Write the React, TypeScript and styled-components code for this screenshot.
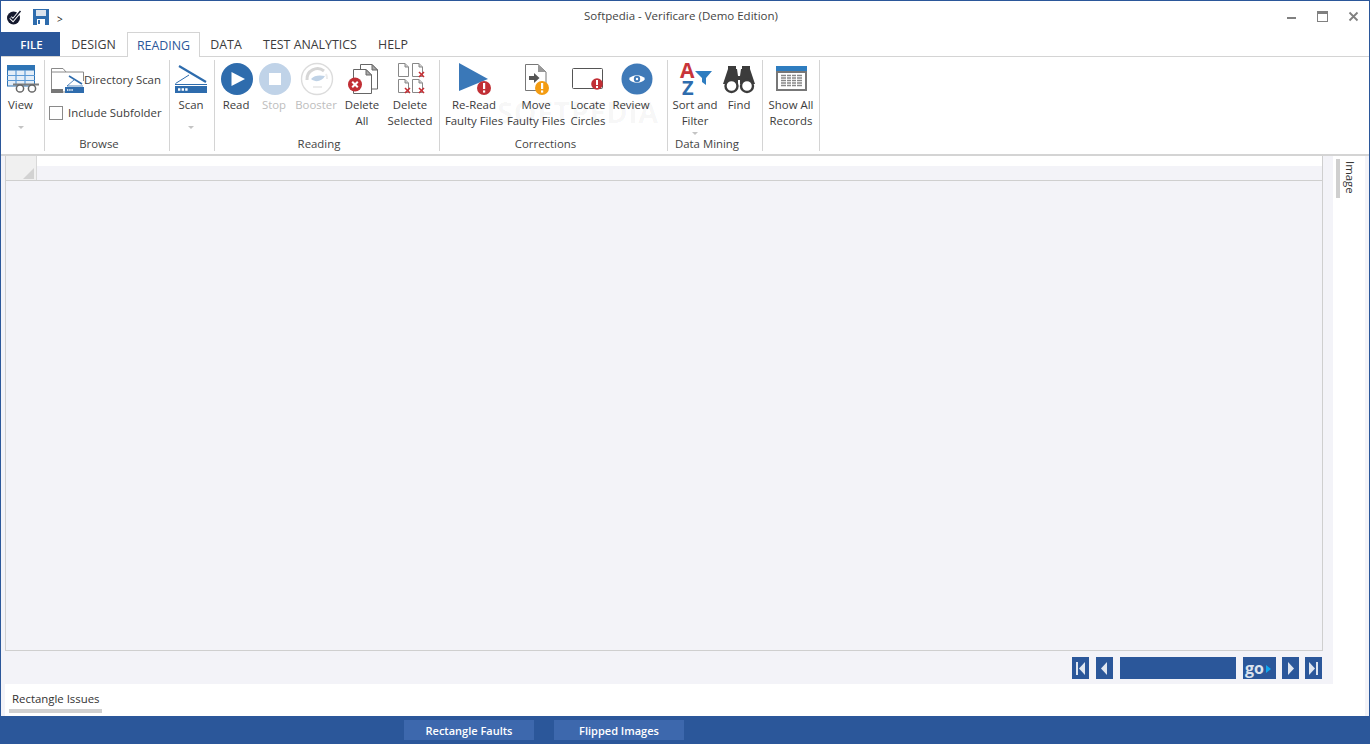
import React from "react";
import styled, { createGlobalStyle } from "styled-components";

const GlobalStyle = createGlobalStyle`
  html, body {
    margin: 0;
    padding: 0;
    overflow: hidden;
    background: #fff;
  }
  * {
    box-sizing: border-box;
  }
`;

const BLUE = "#2b579a";
const LINE = "#d4d4d4";
const PANEL = "#f3f3f8";

const Window = styled.div`
  width: 1370px;
  height: 744px;
  display: flex;
  flex-direction: column;
  position: relative;
  background: #fff;
  border: 1px solid ${BLUE};
  border-bottom: none;
  font-family: "Open Sans", "Liberation Sans", sans-serif;
  font-size: 11.4px;
  color: #3c3c3c;
`;

const TitleBar = styled.div`
  height: 31px;
  flex: none;
  display: grid;
  grid-template-columns: 1fr auto 1fr;
  align-items: center;
  padding-right: 8px;
`;

const QuickAccess = styled.div`
  display: flex;
  align-items: center;
  gap: 11px;
  padding: 0 0 0 5px;
`;

const Chevron = styled.span`
  font-size: 10px;
  margin: 4px 0 0 -3px;
  color: #222;
`;

const Title = styled.div`
  font-size: 11.5px;
  color: #444;
  padding-bottom: 3px;
`;

const WindowButtons = styled.div`
  display: flex;
  justify-content: flex-end;
  align-items: center;
  gap: 20px;
  padding-right: 2px;
  padding-bottom: 1px;
`;

const TabRow = styled.div`
  height: 25px;
  flex: none;
  display: flex;
  border-bottom: 1px solid ${LINE};
`;

const Tab = styled.div<{ $w: number; $active?: boolean; $file?: boolean }>`
  width: ${({ $w }) => $w}px;
  height: ${({ $active }) => ($active ? "25px" : "24px")};
  display: flex;
  align-items: center;
  justify-content: center;
  font-size: ${({ $file }) => ($file ? "11.5px" : "12.4px")};
  font-weight: ${({ $file }) => ($file ? 600 : 400)};
  padding-left: ${({ $file }) => ($file ? "2px" : "0")};
  background: ${({ $file }) => ($file ? BLUE : "#fff")};
  color: ${({ $file, $active }) => ($file ? "#fff" : $active ? BLUE : "#3c3c3c")};
  border: ${({ $active }) => ($active ? `1px solid ${LINE}` : "none")};
  border-bottom: none;
  position: relative;
  z-index: 1;
`;

const Ribbon = styled.div`
  height: 99px;
  flex: none;
  display: flex;
  border-bottom: 2px solid ${LINE};
`;

const Group = styled.div<{ $w: number }>`
  width: ${({ $w }) => $w}px;
  height: 91px;
  margin-top: 3px;
  flex: none;
  display: flex;
  flex-direction: column;
  border-right: 1px solid ${LINE};
`;

const GroupBody = styled.div`
  flex: 1;
  display: flex;
  min-height: 0;
`;

const GroupLabel = styled.div`
  height: 15px;
  line-height: 15px;
  padding-right: 16px;
  text-align: center;
  color: #444;
`;

const RibbonButton = styled.div<{ $w: number; $off?: boolean }>`
  width: ${({ $w }) => $w}px;
  flex: none;
  display: flex;
  flex-direction: column;
  align-items: center;
  color: ${({ $off }) => ($off ? "#bdbdbd" : "#3c3c3c")};
`;

const IconSlot = styled.div<{ $shift?: number }>`
  height: 37px;
  flex: none;
  display: flex;
  align-items: flex-start;
  justify-content: center;
  margin-left: ${({ $shift }) => $shift ?? 0}px;
`;

const ButtonText = styled.div`
  line-height: 16px;
  text-align: center;
  white-space: nowrap;
`;

const Caret = styled.span<{ $gap: number }>`
  margin-top: ${({ $gap }) => $gap}px;
  width: 0;
  height: 0;
  border-left: 3.5px solid transparent;
  border-right: 3.5px solid transparent;
  border-top: 3.5px solid #c4c4c4;
`;

const BrowseBody = styled.div`
  padding: 2px 0 0 6px;
  display: flex;
  flex-direction: column;
`;

const BrowseRow = styled.div`
  height: 34px;
  display: flex;
  align-items: center;
  gap: 0;
  white-space: nowrap;
`;

const BrowseIcon = styled.div`
  height: 30px;
  margin-top: 2px;
  flex: none;
`;

const CheckRow = styled.label`
  display: flex;
  align-items: center;
  gap: 5px;
  margin: 9px 0 0 -2px;
  white-space: nowrap;
`;

const CheckBox = styled.span`
  width: 14px;
  height: 14px;
  background: #fff;
  border: 1px solid #8a8a8a;
`;

const Watermark = styled.div`
  position: absolute;
  left: 496px;
  top: 91px;
  font-size: 29px;
  font-weight: 700;
  letter-spacing: 0.5px;
  color: rgba(0, 0, 0, 0.035);
  pointer-events: none;
`;

const Workspace = styled.div`
  flex: 1;
  min-height: 0;
  display: flex;
  background: ${PANEL};
  padding: 0 4px;
`;

const MainColumn = styled.div`
  flex: 1;
  min-width: 0;
  display: flex;
  flex-direction: column;
`;

const GridPanel = styled.div`
  flex: 1;
  margin-right: 10px;
  border: 1px solid #cfcfcf;
  border-top: none;
`;

const GridHeader = styled.div`
  height: 25px;
  display: flex;
  border-bottom: 1px solid #cfcfcf;
`;

const CornerCell = styled.div`
  width: 30px;
  background: #f0f0f0;
  display: flex;
  align-items: flex-end;
  justify-content: flex-end;
  padding: 0 2px 1px 0;
`;

const CornerMark = styled.span`
  width: 0;
  height: 0;
  border-left: 11px solid transparent;
  border-bottom: 11px solid #d2d2d2;
`;

const HeaderFill = styled.div`
  flex: 1;
  background: linear-gradient(#fff 0, #fff 40%, ${PANEL} 40%, ${PANEL} 100%);
  border-left: 1px solid #d8d8d8;
`;

const NavBar = styled.div`
  height: 33px;
  flex: none;
  display: flex;
  justify-content: flex-end;
  align-items: flex-start;
  padding: 6px 11px 0 0;
`;

const NavButton = styled.button<{ $mr: number }>`
  width: 17px;
  height: 22px;
  margin: 0 ${({ $mr }) => $mr}px 0 0;
  padding: 0;
  border: none;
  background: ${BLUE};
  display: flex;
  align-items: center;
  justify-content: center;
`;

const PageField = styled.div`
  width: 116px;
  height: 22px;
  margin-right: 7px;
  background: ${BLUE};
`;

const GoButton = styled.button`
  width: 33px;
  height: 22px;
  margin-right: 6px;
  padding: 0 0 0 2px;
  border: none;
  background: ${BLUE};
  color: #dbe3ee;
  font-family: "Open Sans", sans-serif;
  font-size: 16px;
  font-weight: 700;
  line-height: 20px;
  display: flex;
  align-items: center;
  gap: 2px;
`;

const SidePanel = styled.div`
  width: 32px;
  flex: none;
  background: #fff;
  padding: 3px 0 0 3px;
`;

const SideTab = styled.div`
  width: 22px;
  height: 39px;
  border-left: 4px solid #cfcfcf;
  writing-mode: vertical-rl;
  padding: 2px 0 0 0;
  line-height: 16px;
  color: #333;
`;

const FooterBand = styled.div`
  height: 32px;
  flex: none;
  background: ${PANEL};
  padding: 0 4px;
`;

const FooterTabs = styled.div`
  height: 100%;
  background: #fff;
  padding: 6px 0 0 4px;
`;

const FooterTab = styled.div`
  width: 93px;
  height: 23px;
  line-height: 18px;
  padding-left: 3px;
  border-bottom: 4px solid #d0d0d0;
  white-space: nowrap;
  color: #333;
`;

const StatusBar = styled.div`
  height: 28px;
  flex: none;
  background: ${BLUE};
  display: flex;
  gap: 20px;
  padding: 4px 0 0 403px;
`;

const StatusButton = styled.div`
  width: 130px;
  height: 20px;
  background: #3d68ad;
  color: #fff;
  font-weight: 600;
  font-size: 11px;
  line-height: 21px;
  text-align: center;
`;

const AppMark = () => (
  <svg width="16" height="16" viewBox="0 0 16 16">
    <circle cx="7.5" cy="9" r="6.5" fill="#14182c" />
    <path d="M4.5 8.5 L7 11 L14.5 2" fill="none" stroke="#fff" strokeWidth="3.4" />
    <path d="M4.5 8.5 L7 11 L14.5 2" fill="none" stroke="#14182c" strokeWidth="1.5" />
  </svg>
);

const SaveIcon = () => (
  <svg width="16" height="16" viewBox="0 0 16 16">
    <rect width="16" height="16" fill="#2e6cad" />
    <rect x="3" y="1" width="10" height="6" fill="#dbe3ec" />
    <rect x="4" y="10" width="8" height="6" fill="#fff" />
    <rect x="5" y="11" width="2" height="4" fill="#2e6cad" />
  </svg>
);

const ViewIcon = () => (
  <svg width="36" height="36" viewBox="0 0 36 36">
    <rect x="4" y="5" width="28" height="5" fill="#2e74b5" />
    <rect x="4.5" y="10" width="27" height="16" fill="#e4eef8" stroke="#2e74b5" />
    <path d="M4 15.5H32M4 20.5H32M13 10V26M22 10V26" stroke="#5c9ad6" strokeWidth="1.2" />
    <path d="M10 24.5H36" stroke="#7d7d7d" strokeWidth="2" />
    <circle cx="17" cy="28.5" r="3.6" fill="#fff" stroke="#666" strokeWidth="1.5" />
    <circle cx="29" cy="28.5" r="3.6" fill="#fff" stroke="#666" strokeWidth="1.5" />
  </svg>
);

const DirectoryIcon = () => (
  <svg width="33" height="30" viewBox="0 0 33 30">
    <path d="M0.5 27V3.5H12L15 7H32.5V16" fill="none" stroke="#8a8a8a" />
    <path d="M0.5 7H15" stroke="#8a8a8a" />
    <rect x="0" y="24" width="12" height="4" fill="#777" />
    <path d="M12 27H14" stroke="#8a8a8a" />
    <path d="M18 11 L31 19" stroke="#2e6cad" strokeWidth="1.6" />
    <path d="M16 21 L23 15 M16 21H32" stroke="#2e6cad" strokeWidth="0.8" fill="none" />
    <rect x="14" y="22" width="19" height="6" fill="#2e6cad" />
    <path d="M16 25H22" stroke="#fff" strokeWidth="1.4" strokeDasharray="1.4 .8" />
  </svg>
);

const ScanIcon = () => (
  <svg width="34" height="36" viewBox="0 0 34 36">
    <path d="M5 6 L32 22" stroke="#2e6cad" strokeWidth="2.2" />
    <path d="M1.5 23.5 L15 15 M1 24.5H33" stroke="#2e6cad" strokeWidth="1" fill="none" />
    <rect x="1" y="26" width="32" height="7" fill="#2e6cad" />
    <path d="M4 29.5H14" stroke="#fff" strokeWidth="2.4" strokeDasharray="2.4 1.2" />
  </svg>
);

const ReadIcon = () => (
  <svg width="34" height="36" viewBox="0 0 34 36">
    <circle cx="17" cy="19" r="16" fill="#2e6cad" />
    <path d="M11.5 12 L25 19 L11.5 26Z" fill="#fff" />
  </svg>
);

const StopIcon = () => (
  <svg width="34" height="36" viewBox="0 0 34 36">
    <circle cx="17" cy="19" r="16" fill="#c0d3e8" />
    <rect x="11" y="13" width="12" height="12" fill="#fff" />
  </svg>
);

const BoosterIcon = () => (
  <svg width="34" height="36" viewBox="0 0 34 36">
    <circle cx="17" cy="19" r="15.5" fill="#fff" stroke="#dcdcdc" strokeWidth="1.4" />
    <path d="M7 20 A10.5 10.5 0 0 1 24 11" fill="none" stroke="#d6d6d6" strokeWidth="3" />
    <path d="M26 14 A10 10 0 0 1 27 19" fill="none" stroke="#ececec" strokeWidth="2" />
    <path d="M11 19 C14 15 20 15 25 16 C22 21 16 23 11 19Z" fill="#bfd2e6" />
    <path d="M13 27H22" stroke="#e2e2e2" strokeWidth="1.4" />
  </svg>
);

const DeleteAllIcon = () => (
  <svg width="34" height="36" viewBox="0 0 34 36">
    <path d="M15.5 4.5H27L32.5 10V29H15.5Z" fill="#fff" stroke="#666" />
    <path d="M27 4.5V10H32.5Z" fill="#aaa" stroke="#666" />
    <path d="M8.5 9.5H21L26.5 15V33.5H8.5Z" fill="#fff" stroke="#666" />
    <path d="M21 9.5V15H26.5Z" fill="#aaa" stroke="#666" />
    <circle cx="10" cy="24.5" r="7" fill="#c12f35" />
    <path d="M7.2 21.7L12.8 27.3M12.8 21.7L7.2 27.3" stroke="#fff" strokeWidth="2" />
  </svg>
);

const smallDoc = (x: number, y: number, cross: boolean) => (
  <g key={`${x}-${y}`}>
    <path
      d={`M${x + 0.5} ${y + 0.5}H${x + 7}L${x + 10.5} ${y + 4}V${y + 13.5}H${x + 0.5}Z`}
      fill="#fff"
      stroke="#888"
    />
    <path d={`M${x + 7} ${y + 0.5}V${y + 4}H${x + 10.5}`} fill="#ccc" stroke="#888" />
    {cross && (
      <path
        d={`M${x + 7} ${y + 9}L${x + 12} ${y + 14}M${x + 12} ${y + 9}L${x + 7} ${y + 14}`}
        stroke="#c62f35"
        strokeWidth="1.6"
      />
    )}
  </g>
);

const DeleteSelectedIcon = () => (
  <svg width="34" height="36" viewBox="0 0 34 36">
    {smallDoc(5, 3, false)}
    {smallDoc(19, 3, true)}
    {smallDoc(5, 19, true)}
    {smallDoc(19, 19, true)}
  </svg>
);

const ReReadIcon = () => (
  <svg width="34" height="36" viewBox="0 0 34 36">
    <path d="M2 3 L31 19 L2 31Z" fill="#3a78b8" />
    <circle cx="27" cy="28" r="7" fill="#c12f35" />
    <rect x="26" y="23" width="2.2" height="6" fill="#fff" />
    <rect x="26" y="30.4" width="2.2" height="2.2" fill="#fff" />
  </svg>
);

const MoveIcon = () => (
  <svg width="34" height="36" viewBox="0 0 34 36">
    <path d="M6.5 4.5H19L27 12V30.5H6.5Z" fill="#fff" stroke="#777" />
    <path d="M19 4.5V12H27Z" fill="#999" />
    <path d="M10 16H15V13L20.5 18L15 23V20H10Z" fill="#555" />
    <circle cx="23" cy="28" r="7" fill="#f39c12" />
    <rect x="22" y="23" width="2.2" height="6" fill="#fff" />
    <rect x="22" y="30.4" width="2.2" height="2.2" fill="#fff" />
  </svg>
);

const LocateIcon = () => (
  <svg width="36" height="36" viewBox="0 0 36 36">
    <rect x="2.5" y="8.5" width="30" height="20" rx="1" fill="#fff" stroke="#555" />
    <circle cx="27" cy="24" r="5.8" fill="#c12f35" />
    <rect x="26" y="20" width="2" height="5" fill="#fff" />
    <rect x="26" y="26" width="2" height="2" fill="#fff" />
  </svg>
);

const ReviewIcon = () => (
  <svg width="34" height="36" viewBox="0 0 34 36">
    <circle cx="17" cy="19" r="15.5" fill="#3f7ab8" />
    <path d="M9 19 C12 14 22 14 25 19 C22 24 12 24 9 19Z" fill="#fff" />
    <circle cx="17" cy="19" r="3.2" fill="#3f7ab8" />
    <circle cx="17" cy="19" r="1.2" fill="#fff" />
  </svg>
);

const SortIcon = () => (
  <svg width="34" height="36" viewBox="0 0 34 36" overflow="visible">
    <text x="-1" y="18" fontFamily="'Open Sans', sans-serif" fontSize="21" fontWeight="700" fill="#c8353a">
      A
    </text>
    <text x="1" y="35" fontFamily="'Open Sans', sans-serif" fontSize="20" fontWeight="700" fill="#2e6cad">
      Z
    </text>
    <path d="M14 11H31L25 18V25L21 22V18Z" fill="#2e7dc0" />
  </svg>
);

const FindIcon = () => (
  <svg width="34" height="36" viewBox="0 0 34 36">
    <path d="M6 6H14V9H15L16 16H18L19 9H20V6H28V9L33 24H18V20H16V24H1L6 9Z" fill="#3c3c3c" />
    <circle cx="9.5" cy="26" r="6" fill="#fff" stroke="#3c3c3c" strokeWidth="2.4" />
    <circle cx="25" cy="26" r="6" fill="#fff" stroke="#3c3c3c" strokeWidth="2.4" />
  </svg>
);

const RecordsIcon = () => (
  <svg width="34" height="36" viewBox="0 0 34 36">
    <rect x="2" y="6" width="31" height="6" fill="#2e7dc0" />
    <rect x="3" y="12" width="29" height="18" fill="#fff" stroke="#777" strokeWidth="2" />
    <path
      d="M7 15.5H28M7 18H28M7 20.5H28M7 23H28M7 25.5H28"
      stroke="#888"
      strokeWidth="1.3"
    />
    <path d="M12.5 14V27M17.5 14V27M22.5 14V27" stroke="#fff" strokeWidth="1" />
  </svg>
);

const GoArrow = () => (
  <svg width="5" height="8" viewBox="0 0 5 8" style={{ flex: "none", marginTop: 1 }}>
    <path d="M0 0L5 4L0 8Z" fill="#0fa8f0" />
  </svg>
);

const Arrow = ({ dir, bar }: { dir: "left" | "right"; bar?: boolean }) => (
  <svg width="11" height="13" viewBox="0 0 11 13">
    {dir === "left" ? (
      <>
        {bar && <rect x="1" y="0" width="2" height="13" fill="#dfe6f0" />}
        <path d={bar ? "M10 0V13L4 6.5Z" : "M8 0V13L2 6.5Z"} fill="#dfe6f0" />
      </>
    ) : (
      <>
        <path d={bar ? "M1 0V13L7 6.5Z" : "M3 0V13L9 6.5Z"} fill="#dfe6f0" />
        {bar && <rect x="8" y="0" width="2" height="13" fill="#dfe6f0" />}
      </>
    )}
  </svg>
);

const tabs = [
  { label: "DESIGN", w: 67 },
  { label: "READING", w: 73, active: true },
  { label: "DATA", w: 52 },
  { label: "TEST ANALYTICS", w: 116 },
  { label: "HELP", w: 50 },
];

const App: React.FC = () => {
  return (
    <Window>
      <GlobalStyle />
      <TitleBar>
        <QuickAccess>
          <AppMark />
          <SaveIcon />
          <Chevron>&gt;</Chevron>
        </QuickAccess>
        <Title>Softpedia - Verificare (Demo Edition)</Title>
        <WindowButtons>
          <svg width="11" height="11" viewBox="0 0 11 11">
            <rect x="1" y="6" width="9" height="2" fill="#808080" />
          </svg>
          <svg width="11" height="11" viewBox="0 0 11 11">
            <rect x="0.5" y="0.5" width="10" height="10" fill="none" stroke="#808080" />
            <rect x="0" y="0" width="11" height="3" fill="#808080" />
          </svg>
          <svg width="11" height="11" viewBox="0 0 11 11">
            <path d="M1.5 1.5L9.5 9.5M9.5 1.5L1.5 9.5" stroke="#808080" strokeWidth="1.8" />
          </svg>
        </WindowButtons>
      </TitleBar>

      <TabRow>
        <Tab $w={59} $file>
          FILE
        </Tab>
        {tabs.map((tab) => (
          <Tab key={tab.label} $w={tab.w} $active={tab.active}>
            {tab.label}
          </Tab>
        ))}
      </TabRow>

      <Ribbon>
        <Group $w={44}>
          <GroupBody>
            <RibbonButton $w={39}>
              <IconSlot>
                <ViewIcon />
              </IconSlot>
              <ButtonText>View</ButtonText>
              <Caret $gap={13} />
            </RibbonButton>
          </GroupBody>
          <GroupLabel />
        </Group>

        <Group $w={125}>
          <GroupBody>
            <BrowseBody>
              <BrowseRow>
                <BrowseIcon>
                  <DirectoryIcon />
                </BrowseIcon>
                Directory Scan
              </BrowseRow>
              <CheckRow>
                <CheckBox />
                Include Subfolder
              </CheckRow>
            </BrowseBody>
          </GroupBody>
          <GroupLabel>Browse</GroupLabel>
        </Group>

        <Group $w={45}>
          <GroupBody>
            <RibbonButton $w={42}>
              <IconSlot>
                <ScanIcon />
              </IconSlot>
              <ButtonText>Scan</ButtonText>
              <Caret $gap={13} />
            </RibbonButton>
          </GroupBody>
          <GroupLabel />
        </Group>

        <Group $w={225}>
          <GroupBody>
            <RibbonButton $w={42}>
              <IconSlot $shift={2}>
                <ReadIcon />
              </IconSlot>
              <ButtonText>Read</ButtonText>
            </RibbonButton>
            <RibbonButton $w={34} $off>
              <IconSlot $shift={2}>
                <StopIcon />
              </IconSlot>
              <ButtonText>Stop</ButtonText>
            </RibbonButton>
            <RibbonButton $w={50} $off>
              <IconSlot $shift={2}>
                <BoosterIcon />
              </IconSlot>
              <ButtonText>Booster</ButtonText>
            </RibbonButton>
            <RibbonButton $w={42}>
              <IconSlot>
                <DeleteAllIcon />
              </IconSlot>
              <ButtonText>
                Delete
                <br />
                All
              </ButtonText>
            </RibbonButton>
            <RibbonButton $w={54}>
              <IconSlot>
                <DeleteSelectedIcon />
              </IconSlot>
              <ButtonText>
                Delete
                <br />
                Selected
              </ButtonText>
            </RibbonButton>
          </GroupBody>
          <GroupLabel>Reading</GroupLabel>
        </Group>

        <Group $w={228}>
          <GroupBody>
            <RibbonButton $w={68}>
              <IconSlot>
                <ReReadIcon />
              </IconSlot>
              <ButtonText>
                Re-Read
                <br />
                Faulty Files
              </ButtonText>
            </RibbonButton>
            <RibbonButton $w={56}>
              <IconSlot>
                <MoveIcon />
              </IconSlot>
              <ButtonText>
                Move
                <br />
                Faulty Files
              </ButtonText>
            </RibbonButton>
            <RibbonButton $w={48}>
              <IconSlot>
                <LocateIcon />
              </IconSlot>
              <ButtonText>
                Locate
                <br />
                Circles
              </ButtonText>
            </RibbonButton>
            <RibbonButton $w={38}>
              <IconSlot $shift={12}>
                <ReviewIcon />
              </IconSlot>
              <ButtonText>Review</ButtonText>
            </RibbonButton>
          </GroupBody>
          <GroupLabel>Corrections</GroupLabel>
        </Group>

        <Group $w={95}>
          <GroupBody>
            <RibbonButton $w={54}>
              <IconSlot $shift={6}>
                <SortIcon />
              </IconSlot>
              <ButtonText>
                Sort and
                <br />
                Filter
              </ButtonText>
              <Caret $gap={3} />
            </RibbonButton>
            <RibbonButton $w={34}>
              <IconSlot>
                <FindIcon />
              </IconSlot>
              <ButtonText>Find</ButtonText>
            </RibbonButton>
          </GroupBody>
          <GroupLabel>Data Mining</GroupLabel>
        </Group>

        <Group $w={57}>
          <GroupBody>
            <RibbonButton $w={56}>
              <IconSlot>
                <RecordsIcon />
              </IconSlot>
              <ButtonText>
                Show All
                <br />
                Records
              </ButtonText>
            </RibbonButton>
          </GroupBody>
          <GroupLabel />
        </Group>
      </Ribbon>

      <Watermark>SOFTPEDIA</Watermark>

      <Workspace>
        <MainColumn>
          <GridPanel>
            <GridHeader>
              <CornerCell>
                <CornerMark />
              </CornerCell>
              <HeaderFill />
            </GridHeader>
          </GridPanel>
          <NavBar>
            <NavButton $mr={7}>
              <Arrow dir="left" bar />
            </NavButton>
            <NavButton $mr={7}>
              <Arrow dir="left" />
            </NavButton>
            <PageField />
            <GoButton>
              go
              <GoArrow />
            </GoButton>
            <NavButton $mr={6}>
              <Arrow dir="right" />
            </NavButton>
            <NavButton $mr={0}>
              <Arrow dir="right" bar />
            </NavButton>
          </NavBar>
        </MainColumn>
        <SidePanel>
          <SideTab>Image</SideTab>
        </SidePanel>
      </Workspace>

      <FooterBand>
        <FooterTabs>
          <FooterTab>Rectangle Issues</FooterTab>
        </FooterTabs>
      </FooterBand>

      <StatusBar>
        <StatusButton>Rectangle Faults</StatusButton>
        <StatusButton>Flipped Images</StatusButton>
      </StatusBar>
    </Window>
  );
};

export default App;
